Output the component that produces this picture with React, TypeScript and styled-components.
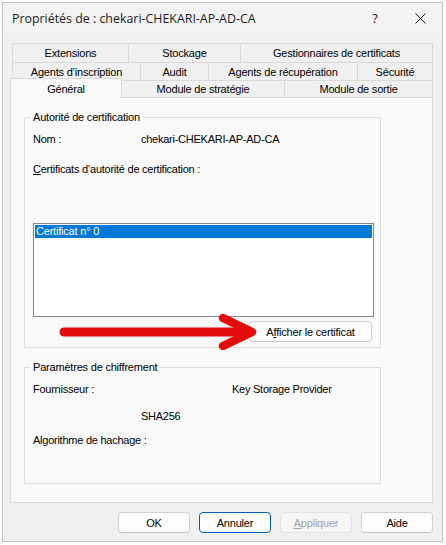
import React from "react";
import styled, { createGlobalStyle, css } from "styled-components";

const GlobalStyle = createGlobalStyle`
  html, body { margin: 0; padding: 0; background: #ffffff; }
  body {
    font-family: "Liberation Sans", Arial, sans-serif;
    font-size: 11px;
    color: #000000;
  }
  * { box-sizing: border-box; }
`;

const Window = styled.div`
  margin: 2px 0 0 2px;
  width: 441px;
  height: 540px;
  border: 1px solid #c2c2c2;
  background: #f0f0f0;
  display: flex;
  flex-direction: column;
`;

const TitleBar = styled.div`
  height: 30px;
  flex: none;
  display: flex;
  align-items: center;
  padding-left: 9px;
  background: #f3f3f3;
`;

const Title = styled.div`
  flex: 1;
  font-family: "Open Sans", "Noto Sans", sans-serif;
  font-size: 12.4px;
  color: #1b1b1b;
  white-space: nowrap;
`;

const CaptionButton = styled.div<{ $w: number }>`
  width: ${(p) => p.$w}px;
  height: 30px;
  flex: none;
  display: flex;
  align-items: center;
  justify-content: center;
  font-family: "Open Sans", sans-serif;
  font-size: 13px;
  color: #1b1b1b;
`;

const Body = styled.div`
  flex: 1;
  display: flex;
  flex-direction: column;
  padding: 10px 9px 8px 7px;
`;

const TabStrip = styled.div`
  display: flex;
  flex-direction: column;
`;

const TabRow = styled.div<{ $h: number; $indent: number }>`
  display: flex;
  height: ${(p) => p.$h}px;
  padding-left: ${(p) => p.$indent}px;
  align-items: flex-end;
`;

const Tab = styled.div<{ $w: number; $selected?: boolean }>`
  width: ${(p) => p.$w}px;
  flex: none;
  height: 100%;
  margin-left: -1px;
  &:first-child { margin-left: 0; }
  border: 1px solid #d9d9d9;
  border-bottom: none;
  background: #f0f0f0;
  display: flex;
  align-items: center;
  justify-content: center;
  white-space: nowrap;
  letter-spacing: -0.2px;
  ${(p) =>
    p.$selected &&
    css`
      position: relative;
      z-index: 2;
      align-self: flex-start;
      height: calc(100% + 3px);
      margin-top: -2px;
      margin-bottom: -1px;
      background: #f9f9f9;
    `}
`;

const TabPage = styled.div`
  height: 406px;
  flex: none;
  border: 1px solid #d9d9d9;
  background: #f9f9f9;
  padding: 13px 0 0 13px;
  display: flex;
  flex-direction: column;
`;

const Group = styled.fieldset<{ $pb: number; $mt: number }>`
  margin: ${(p) => p.$mt}px 0 0 0;
  width: 357px;
  min-width: 0;
  border: 1px solid #dcdcdc;
  padding: 0 6px ${(p) => p.$pb}px 8px;
`;

const Legend = styled.legend`
  padding: 0 3px;
  margin-left: -3px;
  line-height: 13px;
  font-size: 11px;
  letter-spacing: -0.2px;
`;

const FieldRow = styled.div<{ $mt: number }>`
  display: flex;
  height: 13px;
  line-height: 13px;
  margin-top: ${(p) => p.$mt}px;
  white-space: nowrap;
  letter-spacing: -0.25px;
`;

const FieldLabel = styled.span<{ $w: number }>`
  width: ${(p) => p.$w}px;
  flex: none;
`;

const ListBox = styled.div`
  margin-top: 47px;
  height: 94px;
  border: 1px solid #828790;
  background: #ffffff;
  padding: 1px;
`;

const ListItem = styled.div<{ $selected?: boolean }>`
  height: 13px;
  line-height: 13px;
  padding-left: 1px;
  letter-spacing: -0.2px;
  ${(p) =>
    p.$selected &&
    css`
      background: #0078d7;
      color: #ffffff;
    `}
`;

const ActionRow = styled.div`
  position: relative;
  margin-top: 4px;
  height: 21px;
  display: flex;
  justify-content: flex-end;
  padding-right: 2px;
`;

const ArrowOverlay = styled.svg`
  position: absolute;
  left: 0;
  top: -9px;
  z-index: 3;
  pointer-events: none;
`;

const PushButton = styled.button<{ $w: number; $isDefault?: boolean }>`
  width: ${(p) => p.$w}px;
  height: 21px;
  flex: none;
  padding: 0;
  border-radius: 4px;
  border: 1px solid #d0d0d0;
  border-bottom-color: #c4c4c4;
  background: #fdfdfd;
  font-family: "Liberation Sans", Arial, sans-serif;
  font-size: 11px;
  letter-spacing: -0.2px;
  color: #000000;
  ${(p) =>
    p.$isDefault &&
    css`
      border-color: #005fb8;
    `}
  &:disabled {
    color: #a2a2a2;
    background: #f6f6f6;
    border-color: #e3e3e3;
  }
`;

const ButtonBar = styled.div`
  margin-top: 9px;
  display: flex;
  justify-content: flex-end;
  gap: 9px;
`;

const U = styled.u`
  text-decoration: underline;
  text-underline-offset: 1px;
`;

const tabRows: { label: string; w: number; selected?: boolean }[][] = [
  [
    { label: "Extensions", w: 117 },
    { label: "Stockage", w: 113 },
    { label: "Gestionnaires de certificats", w: 193 },
  ],
  [
    { label: "Agents d’inscription", w: 129 },
    { label: "Audit", w: 69 },
    { label: "Agents de récupération", w: 150 },
    { label: "Sécurité", w: 76 },
  ],
  [
    { label: "Général", w: 112, selected: true },
    { label: "Module de stratégie", w: 164 },
    { label: "Module de sortie", w: 149 },
  ],
];

const rowMeta = [
  { h: 19, indent: 2 },
  { h: 18, indent: 2 },
  { h: 17, indent: 0 },
];

export default function App() {
  return (
    <>
      <GlobalStyle />
      <Window>
        <TitleBar>
          <Title>Propriétés de : chekari-CHEKARI-AP-AD-CA</Title>
          <CaptionButton $w={46}>?</CaptionButton>
          <CaptionButton $w={44}>
            <svg width="11" height="11" viewBox="0 0 11 11">
              <path d="M0.5 0.5 L10.5 10.5 M10.5 0.5 L0.5 10.5" stroke="#1b1b1b" strokeWidth="1" fill="none" />
            </svg>
          </CaptionButton>
        </TitleBar>
        <Body>
          <TabStrip>
            {tabRows.map((row, i) => (
              <TabRow key={i} $h={rowMeta[i].h} $indent={rowMeta[i].indent}>
                {row.map((t) => (
                  <Tab key={t.label} $w={t.w} $selected={t.selected}>
                    {t.label}
                  </Tab>
                ))}
              </TabRow>
            ))}
          </TabStrip>
          <TabPage>
            <Group $mt={0} $pb={5}>
              <Legend>Autorité de certification</Legend>
              <FieldRow $mt={9}>
                <FieldLabel $w={108}>Nom :</FieldLabel>
                <span>chekari-CHEKARI-AP-AD-CA</span>
              </FieldRow>
              <FieldRow $mt={17}>
                <span>
                  <U>C</U>ertificats d’autorité de certification :
                </span>
              </FieldRow>
              <ListBox>
                <ListItem $selected>Certificat n° 0</ListItem>
              </ListBox>
              <ActionRow>
                <ArrowOverlay width="230" height="38" viewBox="0 0 230 38">
                  <path d="M31 20 L212 20" stroke="#e30b0b" strokeWidth="9" strokeLinecap="round" fill="none" />
                  <path
                    d="M190 6 L219 20 L190 34"
                    stroke="#e30b0b"
                    strokeWidth="8.5"
                    strokeLinecap="round"
                    strokeLinejoin="round"
                    fill="none"
                  />
                </ArrowOverlay>
                <PushButton $w={123}>
                  A<U>f</U>ficher le certificat
                </PushButton>
              </ActionRow>
            </Group>
            <Group $mt={13} $pb={36}>
              <Legend>Paramètres de chiffrement</Legend>
              <FieldRow $mt={9}>
                <FieldLabel $w={199}>Fournisseur :</FieldLabel>
                <span>Key Storage Provider</span>
              </FieldRow>
              <FieldRow $mt={14}>
                <FieldLabel $w={108}></FieldLabel>
                <span>SHA256</span>
              </FieldRow>
              <FieldRow $mt={11}>
                <span>Algorithme de hachage :</span>
              </FieldRow>
            </Group>
          </TabPage>
          <ButtonBar>
            <PushButton $w={72}>OK</PushButton>
            <PushButton $w={72} $isDefault>
              Annuler
            </PushButton>
            <PushButton $w={72} disabled>
              <U>A</U>ppliquer
            </PushButton>
            <PushButton $w={72}>Aide</PushButton>
          </ButtonBar>
        </Body>
      </Window>
    </>
  );
}
